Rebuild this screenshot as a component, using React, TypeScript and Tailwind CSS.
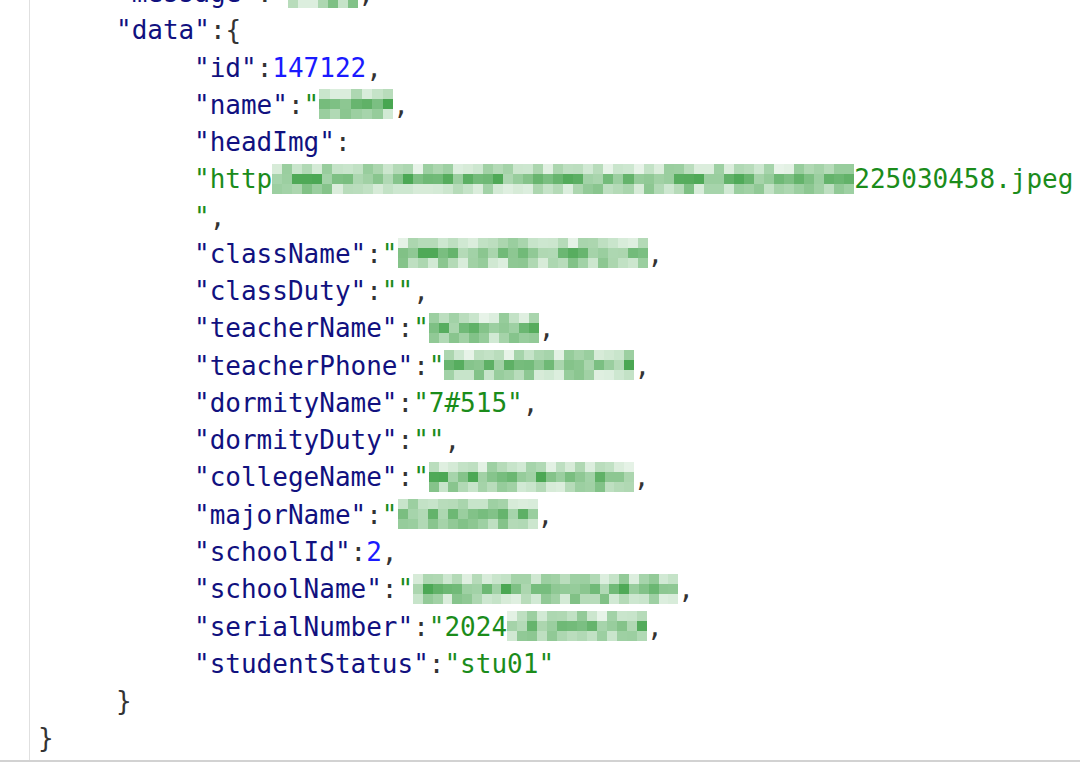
// App.tsx — JSON response viewer with blurred values

type Seg =
  | { t: string; c: "k" | "s" | "n" | "p" }
  | { blur: number; seed: number };

type Line = { indent: 0 | 1 | 2; segs: Seg[] };

const colorClass = {
  k: "text-[#11117f]",
  s: "text-[#1b8c1b]",
  n: "text-[#1a1aff]",
  p: "text-[#333333]",
};

const k = (t: string): Seg => ({ t, c: "k" });
const s = (t: string): Seg => ({ t, c: "s" });
const n = (t: string): Seg => ({ t, c: "n" });
const p = (t: string): Seg => ({ t, c: "p" });
const b = (blur: number, seed: number): Seg => ({ blur, seed });

const lines: Line[] = [
  { indent: 1, segs: [k('"message"'), p(":"), s('"'), b(70, 1), p(",")] },
  { indent: 1, segs: [k('"data"'), p(":{")] },
  { indent: 2, segs: [k('"id"'), p(":"), n("147122"), p(",")] },
  { indent: 2, segs: [k('"name"'), p(":"), s('"'), b(74, 2), p(",")] },
  { indent: 2, segs: [k('"headImg"'), p(":")] },
  { indent: 2, segs: [s('"http'), b(582, 3), s("225030458.jpeg")] },
  { indent: 2, segs: [s('"'), p(",")] },
  { indent: 2, segs: [k('"className"'), p(":"), s('"'), b(250, 4), p(",")] },
  { indent: 2, segs: [k('"classDuty"'), p(":"), s('""'), p(",")] },
  { indent: 2, segs: [k('"teacherName"'), p(":"), s('"'), b(110, 5), p(",")] },
  { indent: 2, segs: [k('"teacherPhone"'), p(":"), s('"'), b(190, 6), p(",")] },
  { indent: 2, segs: [k('"dormityName"'), p(":"), s('"7#515"'), p(",")] },
  { indent: 2, segs: [k('"dormityDuty"'), p(":"), s('""'), p(",")] },
  { indent: 2, segs: [k('"collegeName"'), p(":"), s('"'), b(205, 7), p(",")] },
  { indent: 2, segs: [k('"majorName"'), p(":"), s('"'), b(140, 8), p(",")] },
  { indent: 2, segs: [k('"schoolId"'), p(":"), n("2"), p(",")] },
  { indent: 2, segs: [k('"schoolName"'), p(":"), s('"'), b(265, 9), p(",")] },
  { indent: 2, segs: [k('"serialNumber"'), p(":"), s('"2024'), b(140, 10), p(",")] },
  { indent: 2, segs: [k('"studentStatus"'), p(":"), s('"stu01"')] },
  { indent: 1, segs: [p("}")] },
  { indent: 0, segs: [p("}")] },
];

const indentClass = ["pl-0", "pl-[78px]", "pl-[156px]"];

// pixelated green blocks standing in for the redacted values
function Mosaic({ width, seed }: { width: number; seed: number }) {
  const cols = Math.max(1, Math.round(width / 10));
  let x = seed * 9301 + 49297;
  const rand = () => {
    x = (x * 9301 + 49297) % 233280;
    return x / 233280;
  };
  const cells: number[] = [];
  for (let i = 0; i < cols * 3; i++) {
    const row = Math.floor(i / cols);
    const r = rand();
    cells.push(row === 1 ? 0.35 + r * 0.5 : row === 0 ? 0.1 + r * 0.4 : 0.15 + r * 0.45);
  }
  return (
    <span
      className="inline-grid align-middle -mt-[4px]"
      style={{ width, gridTemplateColumns: `repeat(${cols}, 1fr)` }}
    >
      {cells.map((a, i) => (
        <span
          key={i}
          className="h-[10px]"
          style={{ backgroundColor: `rgba(40, 150, 50, ${a.toFixed(2)})` }}
        />
      ))}
    </span>
  );
}

export default function App() {
  return (
    <div className="w-[1080px] h-[766px] bg-white overflow-hidden">
      <div className="h-[762px] border-b-2 border-[#d2d2d2] pl-[29px]">
        <div className="h-full border-l border-[#e0e0e0] overflow-hidden pl-[8px]">
          <div
            className="-mt-[25px] text-[26px] leading-[37.26px] whitespace-pre"
            style={{ fontFamily: '"DejaVu Sans Mono", monospace' }}
          >
            {lines.map((line, i) => (
              <div key={i} className={indentClass[line.indent]}>
                {line.segs.map((seg, j) =>
                  "blur" in seg ? (
                    <Mosaic key={j} width={seg.blur} seed={seg.seed} />
                  ) : (
                    <span key={j} className={colorClass[seg.c]}>
                      {seg.t}
                    </span>
                  )
                )}
              </div>
            ))}
          </div>
        </div>
      </div>
    </div>
  );
}
